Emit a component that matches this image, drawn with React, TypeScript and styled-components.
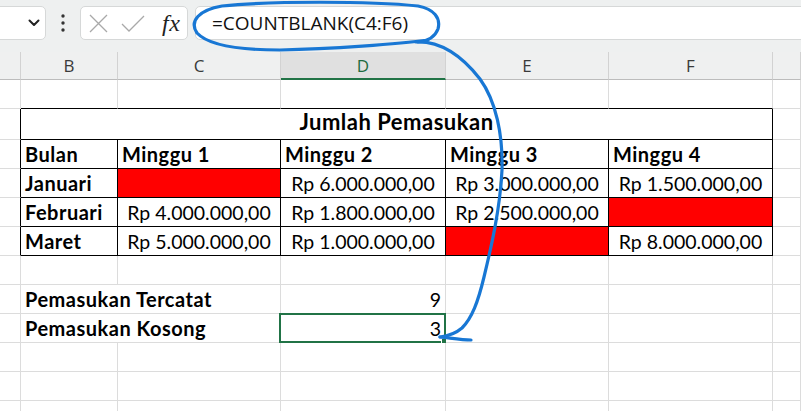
import React from 'react';
import styled, { createGlobalStyle } from 'styled-components';

const Global = createGlobalStyle`
  html, body { margin: 0; padding: 0; background: #fff; }
  body { width: 801px; height: 411px; overflow: hidden; }
`;

const COLS = '21px 97px 163px 165px 163px 164px 1fr';
const GRID = '#dcdcdc';
const GREEN = '#217346';

const Page = styled.div`
  position: relative;
  width: 801px;
  height: 411px;
  overflow: hidden;
  background: #fff;
`;

const Toolbar = styled.div`
  height: 52px;
  box-sizing: border-box;
  background: #eef0f0;
  display: flex;
  align-items: flex-start;
  padding-top: 6px;
`;

const NameBox = styled.div`
  margin-left: -10px;
  width: 56px;
  height: 34px;
  box-sizing: border-box;
  background: #fff;
  border: 1px solid #d6d8d8;
  border-radius: 5px;
  display: flex;
  align-items: center;
  justify-content: flex-end;
  padding-right: 5px;
`;

const Grip = styled.div`
  width: 34px;
  height: 34px;
  display: flex;
  align-items: center;
  justify-content: center;
`;

const EditBox = styled.div`
  width: 108px;
  height: 34px;
  box-sizing: border-box;
  background: #fff;
  border: 1px solid #d6d8d8;
  border-radius: 5px;
  display: flex;
  align-items: center;
  padding-left: 7px;
`;

const IconSlot = styled.span<{ $w: number }>`
  width: ${p => p.$w}px;
  height: 34px;
  display: flex;
  align-items: center;
  justify-content: center;
`;

const Fx = styled.span`
  font-family: 'Liberation Serif', serif;
  font-style: italic;
  font-size: 24px;
  color: #222;
  margin-left: 4px;
  letter-spacing: 0.5px;
  line-height: 1;
`;

const FormulaBox = styled.div`
  margin-left: 7px;
  margin-right: -10px;
  flex: 1;
  height: 34px;
  box-sizing: border-box;
  background: #fff;
  border: 1px solid #d6d8d8;
  border-radius: 5px;
  display: flex;
  align-items: center;
  padding-left: 16px;
  font-family: 'Open Sans', sans-serif;
  font-size: 19px;
  color: #111;
`;

const HeaderRow = styled.div`
  display: grid;
  grid-template-columns: ${COLS};
  height: 28px;
  background: #eff0f0;
`;

const ColHead = styled.div<{ $selected?: boolean }>`
  box-sizing: border-box;
  border-right: 1px solid #d2d2d2;
  border-bottom: ${p => (p.$selected ? `2px solid ${GREEN}` : '1px solid #bcbcbc')};
  background: ${p => (p.$selected ? '#e0e0e0' : '#eff0f0')};
  color: ${p => (p.$selected ? '#1d6b40' : '#3a3a3a')};
  display: flex;
  align-items: center;
  justify-content: center;
  padding-top: ${p => (p.$selected ? '1px' : '0')};
  font-family: 'Open Sans', sans-serif;
  font-size: 17px;
`;

const Sheet = styled.div`
  display: grid;
  grid-template-columns: ${COLS};
  grid-template-rows: 29px 31px repeat(9, 29px) 1fr;
  height: 332px;
  font-family: Lato, 'Noto Sans', sans-serif;
`;

type Line = 'grid' | 'black';
type Weight = 'normal' | 'bold' | 'title';

const Cell = styled.div<{
  $right?: Line;
  $bottom?: Line;
  $fill?: string;
  $align?: 'left' | 'center' | 'right';
  $weight?: Weight;
  $span?: number;
  $pb?: number;
}>`
  position: relative;
  box-sizing: border-box;
  min-width: 0;
  grid-column: span ${p => p.$span ?? 1};
  border-right: 1px solid ${p => (p.$right === 'black' ? '#000' : GRID)};
  border-bottom: 1px solid ${p => (p.$bottom === 'black' ? '#000' : GRID)};
  background: ${p => p.$fill ?? '#fff'};
  display: flex;
  align-items: flex-end;
  justify-content: ${p =>
    p.$align === 'center' ? 'center' : p.$align === 'right' ? 'flex-end' : 'flex-start'};
  padding: 0 4px ${p => p.$pb ?? 4}px 4px;
  font-size: ${p => (p.$weight === 'title' ? 22 : p.$weight === 'bold' ? 20 : 19.5)}px;
  letter-spacing: ${p => (p.$weight === 'title' ? 0.5 : p.$weight === 'bold' ? 0.5 : 0)}px;
  line-height: 1;
  font-weight: ${p => (p.$weight && p.$weight !== 'normal' ? 700 : 400)};
  color: #000;
  white-space: nowrap;
`;

const Selection = styled.div`
  position: absolute;
  left: -2px;
  top: -1px;
  right: -1px;
  bottom: -1px;
  border: 2px solid ${GREEN};
  pointer-events: none;
`;

const Handle = styled.div`
  position: absolute;
  right: -4px;
  bottom: -4px;
  width: 6px;
  height: 6px;
  background: ${GREEN};
  border: 1px solid #fff;
`;

const Overlay = styled.svg`
  position: absolute;
  left: 0;
  top: 0;
  pointer-events: none;
`;

const weeks = ['Minggu 1', 'Minggu 2', 'Minggu 3', 'Minggu 4'];
const data: { month: string; vals: (string | null)[] }[] = [
  { month: 'Januari', vals: [null, 'Rp 6.000.000,00', 'Rp 3.000.000,00', 'Rp 1.500.000,00'] },
  { month: 'Februari', vals: ['Rp 4.000.000,00', 'Rp 1.800.000,00', 'Rp 2.500.000,00', null] },
  { month: 'Maret', vals: ['Rp 5.000.000,00', 'Rp 1.000.000,00', null, 'Rp 8.000.000,00'] },
];

function EmptyRow({ topOfTable }: { topOfTable?: boolean }) {
  return (
    <>
      <Cell />
      {[0, 1, 2, 3, 4].map(i => (
        <Cell key={i} $bottom={topOfTable ? 'black' : 'grid'} />
      ))}
      <Cell />
    </>
  );
}

export default function App() {
  return (
    <Page>
      <Global />
      <Toolbar>
        <NameBox>
          <svg width="12" height="8" viewBox="0 0 12 8">
            <path d="M1.5 1.5 L6 6 L10.5 1.5" fill="none" stroke="#222" strokeWidth="2" strokeLinecap="round" strokeLinejoin="round" />
          </svg>
        </NameBox>
        <Grip>
          <svg width="4" height="20" viewBox="0 0 4 20">
            <circle cx="2" cy="3" r="1.7" fill="#333" />
            <circle cx="2" cy="10" r="1.7" fill="#333" />
            <circle cx="2" cy="17" r="1.7" fill="#333" />
          </svg>
        </Grip>
        <EditBox>
          <IconSlot $w={20}>
            <svg width="19" height="19" viewBox="0 0 19 19">
              <path d="M1 1 L18 18 M18 1 L1 18" stroke="#a9a9a9" strokeWidth="1.3" />
            </svg>
          </IconSlot>
          <IconSlot $w={50}>
            <svg width="24" height="17" viewBox="0 0 24 17">
              <path d="M1 9 L8 16 L23 1" fill="none" stroke="#a9a9a9" strokeWidth="1.3" />
            </svg>
          </IconSlot>
          <Fx>fx</Fx>
        </EditBox>
        <FormulaBox>=COUNTBLANK(C4:F6)</FormulaBox>
      </Toolbar>

      <HeaderRow>
        <ColHead />
        <ColHead>B</ColHead>
        <ColHead>C</ColHead>
        <ColHead $selected>D</ColHead>
        <ColHead>E</ColHead>
        <ColHead>F</ColHead>
        <ColHead />
      </HeaderRow>

      <Sheet>
        <EmptyRow topOfTable />

        <Cell $right="black" />
        <Cell $span={5} $right="black" $bottom="black" $align="center" $weight="title" $pb={6}>
          Jumlah Pemasukan
        </Cell>
        <Cell />

        <Cell $right="black" />
        <Cell $right="black" $bottom="black" $weight="bold">Bulan</Cell>
        {weeks.map(w => (
          <Cell key={w} $right="black" $bottom="black" $weight="bold">{w}</Cell>
        ))}
        <Cell />

        {data.map(row => (
          <React.Fragment key={row.month}>
            <Cell $right="black" />
            <Cell $right="black" $bottom="black" $weight="bold">{row.month}</Cell>
            {row.vals.map((v, i) => (
              <Cell
                key={i}
                $right="black"
                $bottom="black"
                $align="center"
                $fill={v ? '#fff' : '#ff0000'}
              >
                {v}
              </Cell>
            ))}
            <Cell />
          </React.Fragment>
        ))}

        <EmptyRow />

        <Cell />
        <Cell $span={2} $weight="bold">Pemasukan Tercatat</Cell>
        <Cell $align="right">9</Cell>
        <Cell />
        <Cell />
        <Cell />

        <Cell />
        <Cell $span={2} $weight="bold">Pemasukan Kosong</Cell>
        <Cell $align="right">
          3
          <Selection />
          <Handle />
        </Cell>
        <Cell />
        <Cell />
        <Cell />

        <EmptyRow />
        <EmptyRow />
        <EmptyRow />
      </Sheet>

      <Overlay width="801" height="411" viewBox="0 0 801 411">
        <g fill="none" stroke="#1877d4" strokeWidth="3.2" strokeLinecap="round" strokeLinejoin="round">
          <path d="M428 40 C400 44, 330 49, 280 50 C240 50, 208 45, 197 33 C189 21, 199 10, 222 6 C270 1, 370 1, 418 6 C434 9, 441 18, 438 29 C435 37, 429 41, 418 42" />
          <path d="M416 42 C440 41, 462 56, 480 79 C496 101, 503 135, 502 170 C500 210, 491 248, 484 277 C478 302, 472 318, 462 328 C455 334, 448 336, 440 337" />
          <path d="M440 337 C450 338, 462 340, 471 340" />
        </g>
      </Overlay>
    </Page>
  );
}
